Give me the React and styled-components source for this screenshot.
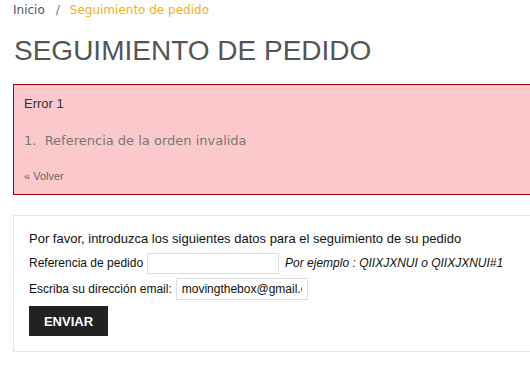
import React from 'react'
import styled, { createGlobalStyle } from 'styled-components'

const Global = createGlobalStyle`
  body {
    margin: 0;
    background: #fff;
    overflow: hidden;
    font-family: "Liberation Sans", Arial, sans-serif;
  }
`

const Page = styled.div`
  padding: 0 0 0 13px;
  width: 580px;
`

const Crumbs = styled.nav`
  font-family: "DejaVu Sans", Verdana, sans-serif;
  font-size: 12px;
  line-height: 18px;
  padding-top: 1px;
  color: #555;
  span.sep {
    margin: 0 10px 0 11px;
    color: #777;
  }
  span.current {
    color: #f5b022;
  }
`

const Title = styled.h1`
  margin: 16px 0 0 1px;
  font-family: "Liberation Sans", Arial, sans-serif;
  font-weight: normal;
  font-size: 28px;
  line-height: 32px;
  color: #555;
`

const ErrorBox = styled.div`
  margin-top: 17px;
  background: #fbc9cb;
  border: 1px solid #a3000b;
  padding: 10px 10px 11px 10px;
  color: #333;
`

const ErrorTitle = styled.p`
  margin: 0;
  font-size: 13px;
  line-height: 18px;
`

const ErrorList = styled.ol`
  margin: 19px 0 0 0;
  padding: 0;
  list-style: none;
  font-family: "DejaVu Sans", Verdana, sans-serif;
  font-size: 13px;
  line-height: 18px;
  color: #777;
`

const Back = styled.a`
  display: block;
  margin-top: 19px;
  font-size: 11px;
  line-height: 14px;
  color: #666;
  text-decoration: none;
`

const FormBox = styled.form`
  margin-top: 20px;
  border: 1px solid #e5e5e5;
  padding: 14px 15px 15px 15px;
  color: #111;
  font-size: 13px;
`

const Intro = styled.p`
  margin: 0 0 4px 0;
  line-height: 18px;
`

const Line = styled.p`
  margin: 0 0 4px 0;
  height: 22px;
  display: flex;
  align-items: center;
  font-size: 12px;
  white-space: nowrap;
`

const Field = styled.input`
  box-sizing: border-box;
  width: ${({ $w }) => $w}px;
  height: ${({ $h }) => $h || 22}px;
  margin-left: 4px;
  border: 1px solid #ddd;
  padding: 0 5px;
  font-family: "Liberation Sans", Arial, sans-serif;
  font-size: 12px;
  color: #111;
  outline: none;
  background: #fff;
`

const Hint = styled.em`
  margin-left: 6px;
  font-style: italic;
  font-size: 12px;
`

const Send = styled.button`
  display: block;
  width: 79px;
  height: 30px;
  margin-top: 6px;
  border: 0;
  background: #222;
  color: #fff;
  font-family: "Liberation Sans", Arial, sans-serif;
  font-weight: bold;
  font-size: 13px;
  text-align: center;
`

export default function App() {
  return (
    <>
      <Global />
      <Page>
        <Crumbs>
          Inicio<span className="sep">/</span>
          <span className="current">Seguimiento de pedido</span>
        </Crumbs>
        <Title>SEGUIMIENTO DE PEDIDO</Title>

        <ErrorBox>
          <ErrorTitle>Error 1</ErrorTitle>
          <ErrorList>
            <li>1.&nbsp; Referencia de la orden invalida</li>
          </ErrorList>
          <Back href="#">« Volver</Back>
        </ErrorBox>

        <FormBox onSubmit={(e) => e.preventDefault()}>
          <Intro>Por favor, introduzca los siguientes datos para el seguimiento de su pedido</Intro>
          <Line>
            Referencia de pedido
            <Field $w={132} $h={21} />
            <Hint>Por ejemplo : QIIXJXNUI o QIIXJXNUI#1</Hint>
          </Line>
          <Line>
            Escriba su dirección email:
            <Field $w={132} defaultValue="movingthebox@gmail.com" />
          </Line>
          <Send type="submit">ENVIAR</Send>
        </FormBox>
      </Page>
    </>
  )
}
